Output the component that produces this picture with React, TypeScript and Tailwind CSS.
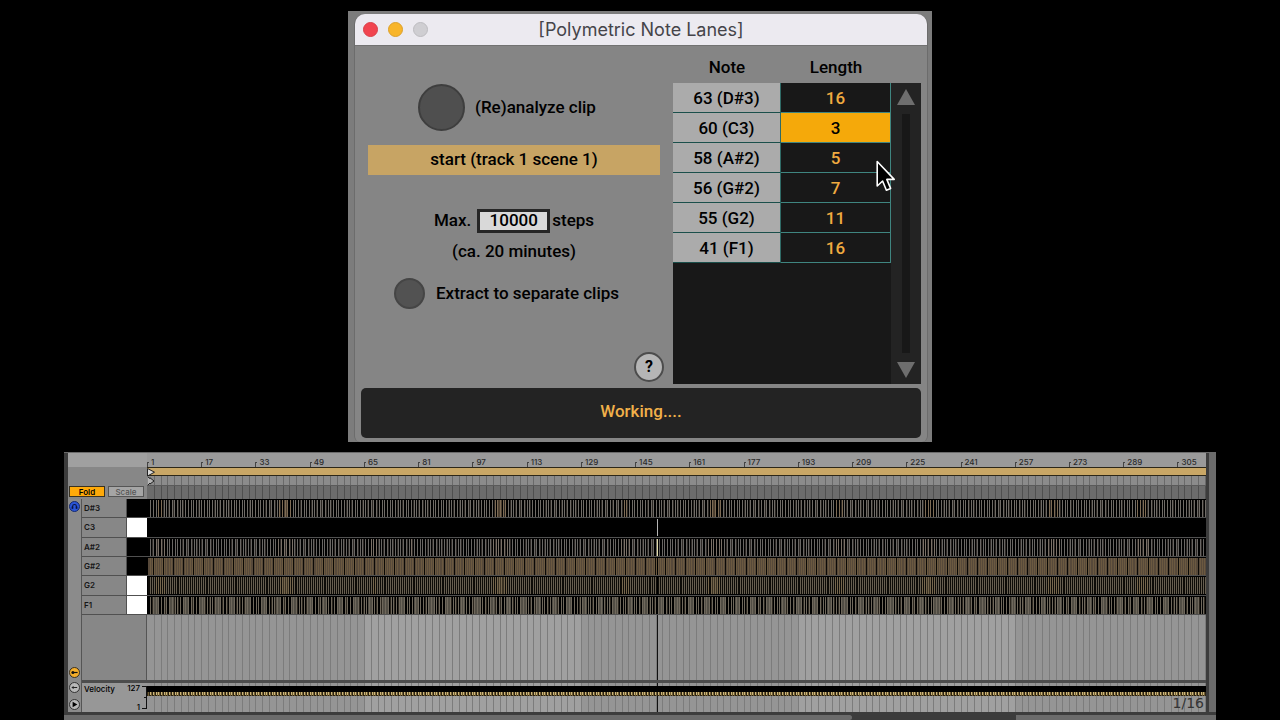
import React from "react";

const GRID_UNITS = 1059;
const LABEL_STEP = 54.24;
const LINE_STEP = LABEL_STEP / 8;
const PLAYHEAD = 510;

const rows = [
  { note: "63 (D#3)", length: "16" },
  { note: "60 (C3)", length: "3", selected: true },
  { note: "58 (A#2)", length: "5" },
  { note: "56 (G#2)", length: "7" },
  { note: "55 (G2)", length: "11" },
  { note: "41 (F1)", length: "16" },
];

const lanes = [
  { name: "D#3", black: true },
  { name: "C3", black: false },
  { name: "A#2", black: true },
  { name: "G#2", black: true },
  { name: "G2", black: false },
  { name: "F1", black: false },
];

const bars = Array.from({ length: 20 }, (_, i) => 1 + i * 16);

function laneColor(name: string, x: number): string | null {
  const hit = (period: number) => x % period < 1;
  const drift = Math.sin(x / 6.8) + Math.sin(x / 17.3);
  if (name === "D#3") {
    if (hit(2.69)) return drift > 1.5 ? "#7d6b55" : "#6f6b66";
    return drift > 1.93 ? "#4d4031" : hit(5.1) ? "#2b2723" : null;
  }
  if (name === "A#2") {
    if (hit(2.72)) return drift > 1.3 ? "#7a7067" : "#696663";
    return hit(4.9) ? "#2f2a27" : null;
  }
  if (name === "G#2") {
    if ((x + 5) % 10.05 < 1) return "#0b0906";
    return hit(2.1) ? "#6b5940" : "#57493a";
  }
  if (name === "G2") {
    if (hit(2.07)) return drift > 1.4 ? "#75664d" : "#665e50";
    return drift > 1.85 ? "#3a3122" : "#0d0b07";
  }
  if (name === "F1") {
    if (hit(2.7)) return "#6f685c";
    return (x + 9) % 15.3 < 5 ? "#524e45" : hit(4.4) ? "#2b261e" : null;
  }
  return null;
}

function LaneNotes({ name }: { name: string }) {
  const groups: Record<string, string> = {};
  for (let x = 1; x < GRID_UNITS; x++) {
    const c = laneColor(name, x);
    if (c) groups[c] = (groups[c] ?? "") + `M${x} 0h1v17h-1z`;
  }
  const head = name === "C3" ? "#b5b5b5" : name === "A#2" ? "#e2dba8" : "#000000";
  return (
    <svg
      className="block h-full w-full"
      viewBox={`0 0 ${GRID_UNITS} 17`}
      preserveAspectRatio="none"
      shapeRendering="crispEdges"
      aria-hidden="true"
    >
      {Object.entries(groups).map(([color, d]) => (
        <path key={color} d={d} fill={color} />
      ))}
      <rect x={PLAYHEAD} y="0" width="1" height="17" fill={head} />
    </svg>
  );
}

function GridLines({ color, zones, head }: { color: string; zones?: boolean; head?: boolean }) {
  let d = "";
  for (let i = 1; i * LINE_STEP < GRID_UNITS; i++) d += `M${Math.round(i * LINE_STEP)} 0h1v10h-1z`;
  return (
    <svg
      className="block h-full w-full"
      viewBox={`0 0 ${GRID_UNITS} 10`}
      preserveAspectRatio="none"
      shapeRendering="crispEdges"
      aria-hidden="true"
    >
      {zones && <path d="M217 0h217v10h-217zM651 0h217v10h-217z" fill="#a0a0a0" />}
      <path d={d} fill={color} />
      {head && <rect x={PLAYHEAD} y="0" width="1" height="10" fill="#111111" />}
    </svg>
  );
}

function VelocityNotes() {
  let light = "";
  let dim = "";
  for (let x = 1; x < GRID_UNITS; x++) {
    if (x % 2.7 < 1) light += `M${x} 0h1v3h-1z`;
    else if (x % 2.7 < 2) dim += `M${x} 0h1v4h-1z`;
  }
  return (
    <svg
      className="block h-1 w-full bg-[#2c2414]"
      viewBox={`0 0 ${GRID_UNITS} 4`}
      preserveAspectRatio="none"
      shapeRendering="crispEdges"
      aria-hidden="true"
    >
      <path d={dim} fill="#6f5c33" />
      <path d={light} fill="#cdb678" />
    </svg>
  );
}

function Dialog() {
  return (
    <section className="w-[584px] max-w-full bg-[#7c7c7c] pt-[3px] pr-1 pl-[6px] font-['Roboto',sans-serif] text-[17px] font-medium text-black">
      <div className="rounded-t-[11px] rounded-b-[6px] border-x border-[#6c6c6c] bg-[#858585]">
        <header className="flex h-8 items-center rounded-t-[10px] border-b border-[#727272] bg-[#eceaf0] px-2">
          <div className="flex flex-1 gap-[10px]">
            <button aria-label="Close" className="size-[15px] rounded-full border border-[#d93f48] bg-[#f1444f]" />
            <button aria-label="Minimize" className="size-[15px] rounded-full border border-[#dca02a] bg-[#f8b52a]" />
            <button aria-label="Zoom" className="size-[15px] rounded-full border border-[#bdbcc0] bg-[#cfced2]" />
          </div>
          <h1 className="font-['Inter',sans-serif] text-[18px] font-normal text-[#454449]">[Polymetric Note Lanes]</h1>
          <div className="flex-1" />
        </header>

        <div className="flex">
          <div className="flex flex-1 flex-col px-[13px] pt-[38px]">
            <div className="flex items-center gap-[10px] pl-[50px]">
              <button id="analyze" className="size-[47px] rounded-full border-2 border-[#3e3e3e] bg-[#4f4f4f]" />
              <label htmlFor="analyze">(Re)analyze clip</label>
            </div>
            <output className="mt-[14px] flex h-[30px] items-center justify-center bg-[#c7a464]">
              start (track 1 scene 1)
            </output>
            <div className="mt-[34px] flex h-6 items-center justify-center">
              <label htmlFor="steps" className="mr-[6px]">Max.</label>
              <input
                id="steps"
                defaultValue="10000"
                className="h-6 w-[73px] border-[3px] border-[#262626] bg-[#d9d9d9] text-center"
              />
              <span className="ml-[2px]">steps</span>
            </div>
            <p className="mt-2 h-5 text-center leading-5">(ca. 20 minutes)</p>
            <div className="mt-[17px] flex items-center gap-[11px] pl-[26px]">
              <button id="extract" className="size-[31px] rounded-full border-2 border-[#454545] bg-[#525252]" />
              <label htmlFor="extract">Extract to separate clips</label>
            </div>
            <button
              aria-label="Help"
              className="mt-[43px] mr-[-4px] mb-[2px] size-[30px] self-end rounded-full border-2 border-[#4c4c4c] bg-[#b5b5b5] text-[16px] leading-none font-bold"
            >
              ?
            </button>
          </div>

          <div className="flex pr-[6px]">
            <div className="w-[218px] bg-[#181818]">
              <table className="w-full border-separate border-spacing-0">
                <thead className="bg-[#858585]">
                  <tr className="h-[37px]">
                    <th className="w-[108px] pt-[6px] pb-0 font-medium">Note</th>
                    <th className="pt-[6px] pb-0 font-medium">Length</th>
                  </tr>
                </thead>
                <tbody>
                  {rows.map((r) => (
                    <tr key={r.note} className="h-[30px] leading-5">
                      <th
                        scope="row"
                        className="border-r border-b border-r-[#2f6a66] border-b-[#1a4f4b] bg-[#ababab] p-0 font-medium"
                      >
                        {r.note}
                      </th>
                      <td
                        className={
                          r.selected
                            ? "border-r border-b border-[#3f8580] bg-[#f5a90a] p-0 text-center"
                            : "border-r border-b border-[#3f8580] bg-[#181818] p-0 text-center text-[#f0ab40]"
                        }
                      >
                        {r.length}
                      </td>
                    </tr>
                  ))}
                </tbody>
              </table>
            </div>
            <div className="mt-[37px] flex w-[30px] flex-col items-center justify-between bg-[#232323] py-[6px]">
              <button aria-label="Scroll up">
                <svg width="18" height="16" viewBox="0 0 18 16" className="block">
                  <path d="M9 0L18 16H0z" fill="#6e6e6e" />
                </svg>
              </button>
              <div className="my-[9px] w-2 flex-1 bg-[#181818]" />
              <button aria-label="Scroll down">
                <svg width="18" height="16" viewBox="0 0 18 16" className="block">
                  <path d="M0 0H18L9 16z" fill="#6e6e6e" />
                </svg>
              </button>
            </div>
          </div>
        </div>

        <div className="px-[6px] pt-1 pb-1">
          <div
            role="status"
            className="flex h-[50px] items-center justify-center rounded-[5px] bg-[#232323] pb-[2px] text-[#f0b04a]"
          >
            Working....
          </div>
        </div>
      </div>
    </section>
  );
}

function Editor() {
  return (
    <section className="mx-16 mt-[10px] flex flex-1 flex-col border-t border-[#6b6b6b] bg-[#3c3c3c] font-['Inter',sans-serif] text-[8px] leading-none text-black">
      <div className="flex flex-1 border-r-[7px] border-r-[#6b6b6b] pr-[3px] pl-1">
        <div className="flex w-[79px] shrink-0 flex-col">
          <div className="h-[14px] bg-[#a0a0a0]" />
          <div className="flex h-8 items-end gap-[3px] bg-[#878787] px-px pb-[2px]">
            <button className="h-[11px] w-9 border border-[#3a3220] bg-[#ffaa0a] font-semibold">Fold</button>
            <button className="h-[11px] w-9 border border-[#555555] bg-[#a5a5a5] font-medium text-[#555555]">Scale</button>
          </div>
          <div className="flex flex-1">
            <div className="flex w-[14px] flex-col items-center border-r border-[#555555] bg-[#8b8b8b] pt-[2px] pb-[2px]">
              <button aria-label="Preview" className="size-[11px]">
                <svg viewBox="0 0 11 11" className="block">
                  <circle cx="5.5" cy="5.5" r="5" fill="#2a55d8" stroke="#14286e" />
                  <path d="M3.6 7.6V5.4a1.9 1.9 0 0 1 3.8 0V7.6" fill="none" stroke="#0a1640" strokeWidth="1.1" />
                  <path d="M2.6 5.6h1.6v2.2H2.6zM6.8 5.6h1.6v2.2H6.8z" fill="#0a1640" />
                </svg>
              </button>
              <button aria-label="Show note lane" className="mt-auto size-[11px]">
                <svg viewBox="0 0 11 11" className="block">
                  <circle cx="5.5" cy="5.5" r="5" fill="#f5ae2a" stroke="#3a3020" />
                  <path d="M4 5.5H8.6" stroke="#111" strokeWidth="1.2" />
                  <circle cx="3.9" cy="5.5" r="1.5" fill="#111" />
                </svg>
              </button>
              <button aria-label="Show velocity lane" className="mt-1 size-[11px]">
                <svg viewBox="0 0 11 11" className="block">
                  <circle cx="5.5" cy="5.5" r="5" fill="#b8b8b8" stroke="#333" />
                  <path d="M4 5.5H8.2" stroke="#222" />
                  <path d="M2.3 5.5L4.6 4V7z" fill="#222" />
                </svg>
              </button>
              <button aria-label="Expand lanes" className="mt-[6px] size-[11px]">
                <svg viewBox="0 0 11 11" className="block">
                  <circle cx="5.5" cy="5.5" r="5" fill="#b8b8b8" stroke="#333" />
                  <path d="M3.6 2.8L8.4 5.5L3.6 8.2z" fill="#000" />
                </svg>
              </button>
            </div>
            <div className="flex flex-1 flex-col bg-[#878787]">
              <div className="grid h-[116px] grid-rows-6">
                {lanes.map((l) => (
                  <div key={l.name} className="flex border-b border-[#505050]">
                    <div className="flex flex-1 items-center border-r border-[#505050] pl-[2px] font-semibold text-[#161616]">
                      {l.name}
                    </div>
                    <div className={l.black ? "w-5 bg-black" : "w-5 bg-white"} />
                  </div>
                ))}
              </div>
              <div className="flex-1 border-r border-[#555555]" />
              <div className="h-[3px] bg-[#4c4c4c]" />
              <div className="flex h-[29px] justify-between bg-[#979797] pl-[2px] font-medium">
                <span className="pt-[2px]">Velocity</span>
                <div className="flex">
                  <div className="flex flex-col justify-between pt-px pr-px pb-px text-right">
                    <span>127</span>
                    <span>1</span>
                  </div>
                  <svg width="6" height="29" viewBox="0 0 6 29" className="block" shapeRendering="crispEdges">
                    <path d="M1 3.5H5.5V25.5H1M3 14.5H5.5" fill="none" stroke="#111" />
                  </svg>
                </div>
              </div>
            </div>
          </div>
        </div>

        <div className="flex min-w-0 flex-1 flex-col">
          <div className="flex h-[14px] overflow-hidden bg-[#9a9a9a]">
            {bars.map((b) => (
              <div
                key={b}
                className="flex shrink-0 items-end"
                style={{ width: `${(LABEL_STEP / GRID_UNITS) * 100}%` }}
              >
                <div className="h-[5px] w-[2px] border-t border-l border-[#444444]" />
                <span className="pb-px pl-[2px] font-medium text-[#2a2a2a]">{b}</span>
              </div>
            ))}
          </div>
          <div className="relative h-[9px] border-y border-[#2c2719] bg-[#c9a766]">
            <svg width="9" height="18" viewBox="0 0 9 18" className="absolute top-0 left-0">
              <path d="M.5 .5L7.5 4.2L.5 8z" fill="#d9d9d9" stroke="#222" />
              <path d="M1 9L3 10.5V9.8L7 13L3 16V15L1 17" fill="#b5b5b5" stroke="#222" />
            </svg>
          </div>
          <div className="h-[9px] bg-[#8b8b8b]">
            <GridLines color="#6a6a6a" />
          </div>
          <div className="h-[14px] border-t border-[#5a5a5a] bg-[#6c6c6c]">
            <GridLines color="#4f4f4f" />
          </div>
          <div className="grid h-[116px] grid-rows-6 bg-black">
            {lanes.map((l) => (
              <div key={l.name} className="overflow-hidden border-b border-[#505050] pt-px">
                <LaneNotes name={l.name} />
              </div>
            ))}
          </div>
          <div className="relative min-h-[65px] flex-1 bg-[#959595]">
            <div className="absolute inset-0">
              <GridLines color="#7c7c7c" zones head />
            </div>
          </div>
          <div className="h-[3px] bg-[#4c4c4c]" />
          <div className="relative h-[29px] bg-[#959595]">
            <GridLines color="#7c7c7c" zones head />
            <div className="absolute inset-x-0 top-[3px] border-t-[6px] border-black">
              <VelocityNotes />
            </div>
            <span className="absolute right-[2px] bottom-[2px] font-['DejaVu_Sans',sans-serif] text-[14px] leading-none text-[#333333]">
              1/16
            </span>
          </div>
        </div>
      </div>
      <div className="flex h-2 border-t-[3px] border-[#3c3c3c]">
        <div className="h-full flex-[788] rounded-r-sm bg-[#6b6b6b]" />
        <div className="h-full flex-[164] bg-[#3c3c3c]" />
        <div className="h-full flex-[200] bg-[#6b6b6b]" />
      </div>
    </section>
  );
}

export default function App() {
  return (
    <main className="flex min-h-screen flex-col bg-black pt-[11px]">
      <div className="flex flex-col items-center">
        <div className="relative">
          <Dialog />
          <svg
            width="20"
            height="32"
            viewBox="0 0 20 32"
            className="absolute top-[149px] left-[528px]"
            aria-hidden="true"
          >
            <path
              d="M1.2 1.5V26L6.6 21L10.4 30.2L14.6 28.4L10.8 19.4H18.2z"
              fill="#000"
              stroke="#fff"
              strokeWidth="1.6"
              strokeLinejoin="round"
            />
          </svg>
        </div>
      </div>
      <Editor />
    </main>
  );
}
